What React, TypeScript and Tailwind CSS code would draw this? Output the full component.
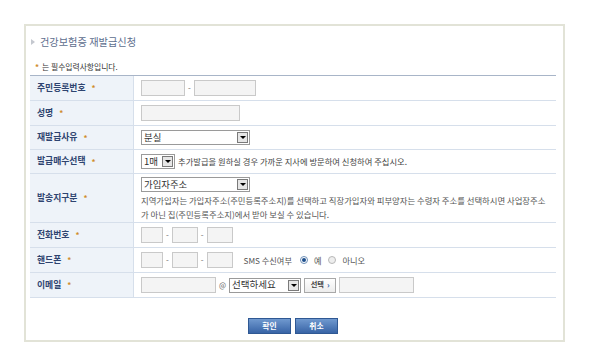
import React from "react";

const FONT = { fontFamily: '"Noto Sans CJK KR", "Noto Sans", sans-serif' };

function Star() {
  return <span className="ml-[6px] text-[#cf8b2b] font-bold text-[8px]">*</span>;
}

function Label({ children }: { children: React.ReactNode }) {
  return (
    <div className="w-[104px] shrink-0 bg-[#eef3f9] border-r border-[#d6dfeb] pl-[7px] flex items-center text-[8.8px] font-bold text-[#2e4470] leading-none">
      <span>{children}</span>
      <Star />
    </div>
  );
}

function Row({ label, h = "h-[25px]", children }: { label: string; h?: string; children: React.ReactNode }) {
  return (
    <div className={`flex ${h} border-b border-[#d6dfeb]`}>
      <Label>{label}</Label>
      <div className="flex-1 pl-[7px] flex items-center">{children}</div>
    </div>
  );
}

function Input({ w }: { w: string }) {
  return <div className={`${w} h-[16px] border border-[#c9c9c9] bg-[#f4f4f4]`} />;
}

function Dash() {
  return <span className="text-[8px] text-[#666] leading-none mx-[3px]">-</span>;
}

function Select({ w, text, big = false }: { w: string; text: string; big?: boolean }) {
  return (
    <div className={`${w} h-[15px] border border-[#9a9a9a] bg-white flex items-center`}>
      <span className={`flex-1 pl-[2px] ${big ? "text-[9.5px]" : "text-[9.4px]"} text-[#333] leading-none whitespace-nowrap`}>{text}</span>
      <div className="w-[11px] h-[11px] mr-[1px] border border-[#7a7a7a] bg-[#e6e6e6] flex items-center justify-center">
        <div className="w-0 h-0 border-l-[3px] border-r-[3px] border-t-[3px] border-l-transparent border-r-transparent border-t-black" />
      </div>
    </div>
  );
}

function Radio({ checked }: { checked: boolean }) {
  return (
    <div className={`w-[8px] h-[8px] rounded-full border ${checked ? "border-[#6d8fb8] bg-white" : "border-[#b8b8b8] bg-[#eeeeee]"} flex items-center justify-center`}>
      {checked && <div className="w-[4px] h-[4px] rounded-full bg-[#1d4f8c]" />}
    </div>
  );
}

export default function App() {
  return (
    <div className="w-[600px] h-[359px] bg-white pt-[24px] pl-[24px]" style={FONT}>
      <div className="w-[541px] h-[318px] border-2 border-[#e2e3d7] pl-[4px] pr-[7px]">
        <div className="h-[32px] flex items-center pl-[1px]">
          <div className="w-0 h-0 border-t-[3px] border-b-[3px] border-l-[4px] border-t-transparent border-b-transparent border-l-[#c4c8cf]" />
          <span className="ml-[5px] text-[10.2px] text-[#5d6e8e] leading-none">건강보험증 재발급신청</span>
        </div>
        <div className="h-[17px] flex items-center pl-[5px] text-[7.8px] text-[#333] leading-none">
          <span className="text-[#cf8b2b] font-bold text-[8px] mr-[3px]">*</span>
          <span>는 필수입력사항입니다.</span>
        </div>
        <div className="border-t border-[#a8b5c8]">
          <Row label="주민등록번호">
            <Input w="w-[44px]" />
            <Dash />
            <Input w="w-[62px]" />
          </Row>
          <Row label="성명">
            <Input w="w-[99px]" />
          </Row>
          <Row label="재발급사유" h="h-[24px]">
            <Select w="w-[109px]" text="분실" />
          </Row>
          <Row label="발급매수선택" h="h-[24px]">
            <Select w="w-[34px]" text="1매" big />
            <span className="ml-[3px] text-[8.3px] text-[#444] leading-none whitespace-nowrap">
              추가발급을 원하실 경우 가까운 지사에 방문하여 신청하여 주십시오.
            </span>
          </Row>
          <div className="flex h-[49px] border-b border-[#d6dfeb]">
            <Label>발송지구분</Label>
            <div className="flex-1 pl-[7px] pt-[3px] flex flex-col">
              <Select w="w-[109px]" text="가입자주소" />
              <div className="mt-[1px] text-[8.35px] text-[#555] leading-[14px] whitespace-nowrap">
                <div>지역가입자는 가입자주소(주민등록주소지)를 선택하고 직장가입자와 피부양자는 수령자 주소를 선택하시면 사업장주소</div>
                <div>가 아닌 집(주민등록주소지)에서 받아 보실 수 있습니다.</div>
              </div>
            </div>
          </div>
          <Row label="전화번호">
            <Input w="w-[22px]" />
            <Dash />
            <Input w="w-[26px]" />
            <Dash />
            <Input w="w-[26px]" />
          </Row>
          <Row label="핸드폰">
            <Input w="w-[22px]" />
            <Dash />
            <Input w="w-[26px]" />
            <Dash />
            <Input w="w-[26px]" />
            <span className="ml-[11px] text-[8.2px] text-[#555] leading-none whitespace-nowrap">SMS 수신여부</span>
            <div className="ml-[8px]"><Radio checked /></div>
            <span className="ml-[6px] text-[8.2px] text-[#555] leading-none">예</span>
            <div className="ml-[7px]"><Radio checked={false} /></div>
            <span className="ml-[6px] text-[8.2px] text-[#555] leading-none">아니오</span>
          </Row>
          <Row label="이메일">
            <Input w="w-[75px]" />
            <span className="mx-[3px] text-[7.5px] text-[#666] leading-none">@</span>
            <Select w="w-[72px]" text="선택하세요" big />
            <div className="ml-[3px] w-[32px] h-[15px] border border-[#a8a8a8] bg-gradient-to-b from-white to-[#ececec] flex items-center justify-center gap-[3px]">
              <span className="text-[7.2px] font-bold text-[#444] leading-none">선택</span>
              <span className="text-[8px] font-bold text-[#2f5ea8] leading-none">›</span>
            </div>
            <div className="ml-[3px]"><Input w="w-[75px]" /></div>
          </Row>
        </div>
        <div className="flex justify-center gap-[4px] mt-[20px]">
          <div className="w-[43px] h-[16px] border border-[#2f5893] bg-gradient-to-b from-[#7099cf] to-[#3864a6] flex items-center justify-center text-white text-[7.8px] font-bold leading-none">
            확인
          </div>
          <div className="w-[43px] h-[16px] border border-[#2f5893] bg-gradient-to-b from-[#7099cf] to-[#3864a6] flex items-center justify-center text-white text-[7.8px] font-bold leading-none">
            취소
          </div>
        </div>
      </div>
    </div>
  );
}
